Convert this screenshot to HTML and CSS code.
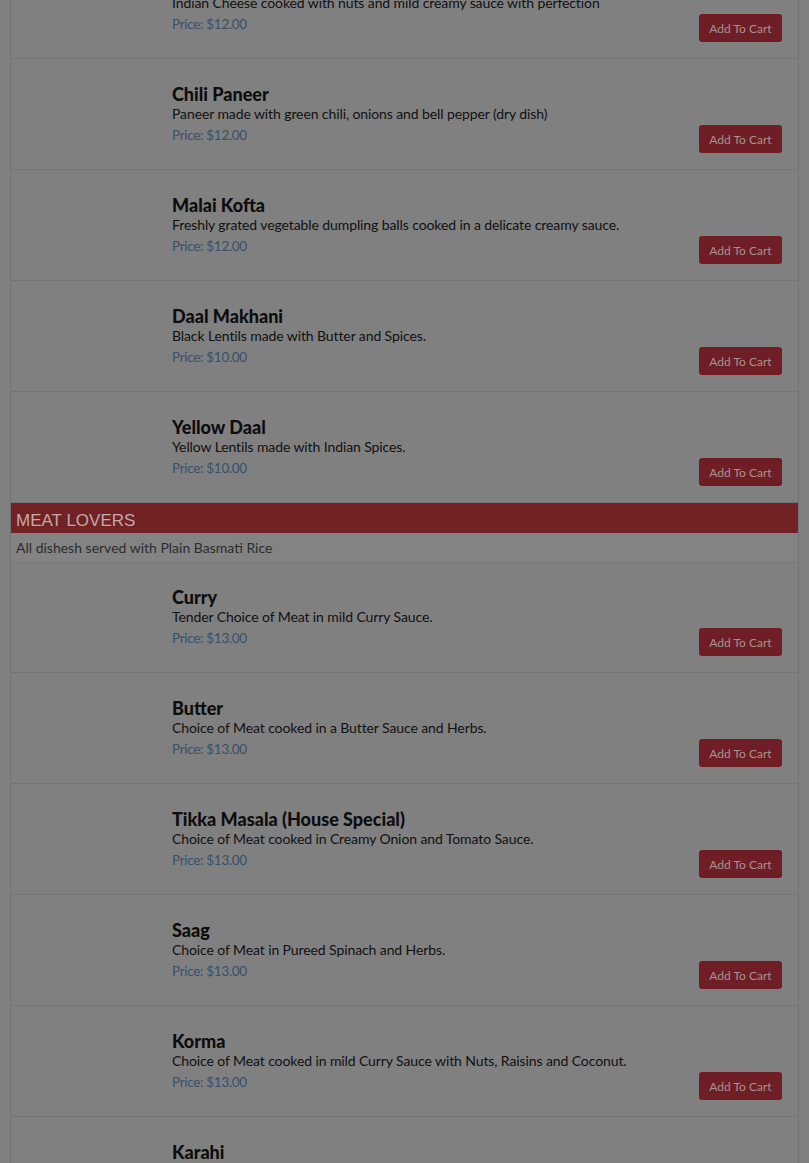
FILE: index.html
```html
<!DOCTYPE html>
<html>
<head>
<meta charset="utf-8">
<link rel="stylesheet" href="styles.css">
</head>
<body>
<div class="menu">
  <div class="item">
    <div class="thumb"></div>
    <div class="info">
      <div class="name">Shahi Paneer</div>
      <div class="desc">Indian Cheese cooked with nuts and mild creamy sauce with perfection</div>
      <div class="price">Price: $12.00</div>
    </div>
    <button class="add">Add To Cart</button>
  </div>
  <div class="item">
    <div class="thumb"></div>
    <div class="info">
      <div class="name">Chili Paneer</div>
      <div class="desc">Paneer made with green chili, onions and bell pepper (dry dish)</div>
      <div class="price">Price: $12.00</div>
    </div>
    <button class="add">Add To Cart</button>
  </div>
  <div class="item">
    <div class="thumb"></div>
    <div class="info">
      <div class="name">Malai Kofta</div>
      <div class="desc">Freshly grated vegetable dumpling balls cooked in a delicate creamy sauce.</div>
      <div class="price">Price: $12.00</div>
    </div>
    <button class="add">Add To Cart</button>
  </div>
  <div class="item">
    <div class="thumb"></div>
    <div class="info">
      <div class="name">Daal Makhani</div>
      <div class="desc">Black Lentils made with Butter and Spices.</div>
      <div class="price">Price: $10.00</div>
    </div>
    <button class="add">Add To Cart</button>
  </div>
  <div class="item">
    <div class="thumb"></div>
    <div class="info">
      <div class="name">Yellow Daal</div>
      <div class="desc">Yellow Lentils made with Indian Spices.</div>
      <div class="price">Price: $10.00</div>
    </div>
    <button class="add">Add To Cart</button>
  </div>
  <div class="cat-head">MEAT LOVERS</div>
  <div class="cat-note">All dishesh served with Plain Basmati Rice</div>
  <div class="item">
    <div class="thumb"></div>
    <div class="info">
      <div class="name">Curry</div>
      <div class="desc">Tender Choice of Meat in mild Curry Sauce.</div>
      <div class="price">Price: $13.00</div>
    </div>
    <button class="add">Add To Cart</button>
  </div>
  <div class="item">
    <div class="thumb"></div>
    <div class="info">
      <div class="name">Butter</div>
      <div class="desc">Choice of Meat cooked in a Butter Sauce and Herbs.</div>
      <div class="price">Price: $13.00</div>
    </div>
    <button class="add">Add To Cart</button>
  </div>
  <div class="item">
    <div class="thumb"></div>
    <div class="info">
      <div class="name">Tikka Masala (House Special)</div>
      <div class="desc">Choice of Meat cooked in Creamy Onion and Tomato Sauce.</div>
      <div class="price">Price: $13.00</div>
    </div>
    <button class="add">Add To Cart</button>
  </div>
  <div class="item">
    <div class="thumb"></div>
    <div class="info">
      <div class="name">Saag</div>
      <div class="desc">Choice of Meat in Pureed Spinach and Herbs.</div>
      <div class="price">Price: $13.00</div>
    </div>
    <button class="add">Add To Cart</button>
  </div>
  <div class="item">
    <div class="thumb"></div>
    <div class="info">
      <div class="name">Korma</div>
      <div class="desc">Choice of Meat cooked in mild Curry Sauce with Nuts, Raisins and Coconut.</div>
      <div class="price">Price: $13.00</div>
    </div>
    <button class="add">Add To Cart</button>
  </div>
  <div class="item">
    <div class="thumb"></div>
    <div class="info">
      <div class="name">Karahi</div>
      <div class="desc">Choice of Meat cooked with Tomatoes, Onions and Bell Peppers.</div>
      <div class="price">Price: $13.00</div>
    </div>
    <button class="add">Add To Cart</button>
  </div>
</div>
</body>
</html>
```

FILE: styles.css
```css
html, body {
  margin: 0;
  padding: 0;
  background: #808080;
  overflow: hidden;
}
body {
  font-family: Lato, "Liberation Sans", sans-serif;
  color: #111;
}
.menu {
  margin: -52px 10px 0 10px;
  border-left: 1px solid #747474;
  border-right: 1px solid #747474;
}
.item {
  display: flex;
  align-items: flex-end;
  height: 110px;
  box-sizing: content-box;
  border-bottom: 1px solid #757575;
  padding: 0 16px 0 0;
}
.thumb {
  width: 161px;
  flex: none;
  align-self: stretch;
}
.info {
  flex: 1;
  align-self: flex-start;
  padding-top: 25px;
}
.name {
  font-size: 18px;
  font-weight: 900;
  line-height: 20px;
  color: #0d0d0d;
}
.desc {
  font-size: 14px;
  line-height: 20px;
  color: #111;
  letter-spacing: -0.1px;
}
.price {
  font-size: 13.5px;
  line-height: 22px;
  color: #38506a;
  letter-spacing: -0.3px;
}
.add {
  flex: none;
  margin-bottom: 16px;
  width: 83px;
  height: 28px;
  border: 0;
  border-radius: 3px;
  background: #6f1e25;
  color: #a89192;
  font-family: Lato, "Liberation Sans", sans-serif;
  font-size: 12px;
  padding: 0;
}
.cat-head {
  background: #722124;
  color: #c3a9aa;
  font-family: "Liberation Sans", Arial, sans-serif;
  font-size: 17px;
  height: 30px;
  line-height: 35px;
  padding-left: 5px;
}
.cat-note {
  height: 29px;
  line-height: 29px;
  padding-left: 5px;
  font-size: 14px;
  color: #2c2c2c;
  background: #838383;
  border-bottom: 1px solid #7a7a7a;
  margin-bottom: -1px;
}
```
